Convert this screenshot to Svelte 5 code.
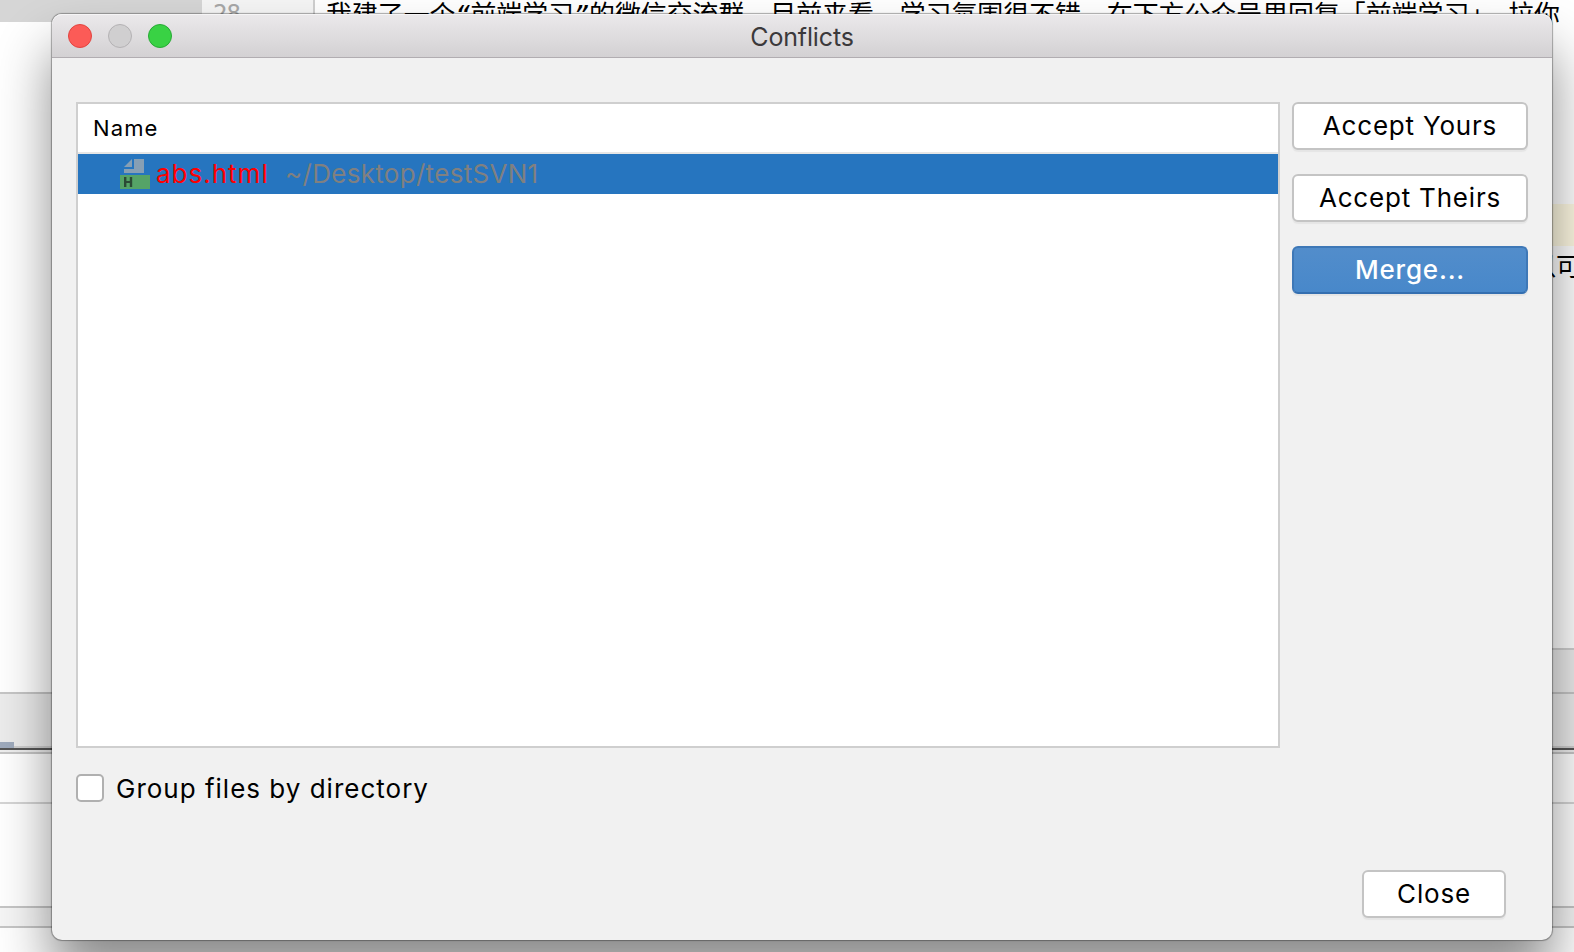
<script>
  const files = [{ name: 'abs.html', path: '~/Desktop/testSVN1' }];
  let grouped = $state(false);
</script>

<div class="screen">
  <div class="editor">
    <div class="side"></div>
    <div class="gutter">28</div>
    <div class="code">
      <div class="line">我建了一个<span class="quote">“</span>前端学习<span class="quote">”</span>的微信交流群，目前来看，学习氛围很不错，在下方公众号里回复「前端学习」，拉你</div>
      <div class="current"></div>
      <div class="line second">以可</div>
    </div>
  </div>
  <div class="status"><span></span></div>
  <div class="toolbar"><i></i></div>
  <div class="heading"></div>
  <div class="panel"></div>
  <div class="row"></div>
  <div class="foot"></div>

  <div class="dialog">
    <header>
      <div class="lights"><b class="red"></b><b class="gray"></b><b class="green"></b></div>
      <h1>Conflicts</h1>
    </header>
    <main>
      <section class="list">
        <div class="head">Name</div>
        {#each files as file}
          <div class="file">
            <svg width="30" height="30" viewBox="0 0 30 30">
              <path d="M4 8 12 0v8zM14 0h10v14H4v-4h10z" fill="#879fb4" />
              <path d="M0 16h30v14H0z" fill="#55a367" />
              <path d="M4 18h2.4v4h3.4v-4h2.4v10H9.800v-4H6.400v4H4z" fill="#2b4a35" />
            </svg>
            <span class="name">{file.name}</span>
            <span class="path">{file.path}</span>
          </div>
        {/each}
      </section>
      <aside>
        <button class="yours">Accept Yours</button>
        <button class="theirs">Accept Theirs</button>
        <button class="primary">Merge...</button>
      </aside>
    </main>
    <label><input type="checkbox" bind:checked={grouped} /><span>Group files by directory</span></label>
    <footer><button class="close">Close</button></footer>
  </div>
</div>

<style>
  :global(body) { margin: 0; }
  * { box-sizing: border-box; }
  .screen { position: relative; width: 1574px; height: 952px; overflow: hidden; background: #fff; display: flex; flex-direction: column; font-family: Inter, 'Noto Sans CJK SC', sans-serif; }
  .editor { height: 648px; display: flex; }
  .side { width: 202px; height: 22px; background: #d6d6d6; }
  .gutter { width: 113px; height: 40px; border-right: 2px solid #cfcfcf; background: #f5f5f5; padding-left: 11px; font: 24px/28px 'DejaVu Sans Mono', monospace; letter-spacing: -1px; color: #a8a8a8; }
  .code { flex: 1; overflow: hidden; color: #000; }
  .line { font: 25.9px/38px 'Noto Sans CJK SC', sans-serif; white-space: nowrap; padding-left: 11px; margin-top: -6px; height: 38px; }
  .quote { display: inline-block; width: 15px; font: italic 25px/30px 'DejaVu Sans Mono', monospace; }
  .current { height: 42px; margin-top: 172px; background: #fffae3; }
  .second { text-align: right; margin-top: 0; margin-right: -8px; }
  .status { height: 46px; background: #fff; border-bottom: 2px solid #c6c6c6; display: flex; justify-content: flex-end; }
  .status span { width: 100px; height: 44px; background: #ececec; border-top: 2px solid #cfcfcf; }
  .toolbar { height: 56px; background: #ececec; border-bottom: 2px solid #555; display: flex; align-items: flex-end; box-shadow: inset 0 -2px #cfcfcf; }
  .toolbar i { width: 14px; height: 6px; background: #9fabbd; }
  .heading { height: 54px; border-bottom: 2px solid #d5d5d5; background: linear-gradient(#eee 2px, #c6c6c6 2px 4px, #fff 4px); }
  .panel { height: 104px; border-bottom: 2px solid #c6c6c6; }
  .row { height: 20px; border-bottom: 2px solid #c6c6c6; background: #f6f6f6; }
  .foot { flex: 1; background: #fff; }

  .dialog { position: absolute; left: 52px; top: 14px; width: 1500px; height: 926px; background: #f1f1f1; border-radius: 10px; box-shadow: 0 0 1px 1px rgba(0, 0, 0, .32), 0 36px 54px rgba(0, 0, 0, .46); display: flex; flex-direction: column; color: #000; }
  header { height: 44px; flex: none; border-radius: 10px 10px 0 0; background: linear-gradient(#ebe9eb, #d3d1d3); border-bottom: 1px solid #b1adb1; box-shadow: inset 0 1px #f6f5f6; display: grid; grid-template-columns: 120px 1fr 120px; align-items: center; }
  .lights { display: flex; gap: 16px; padding-left: 16px; }
  .lights b { width: 24px; height: 24px; border-radius: 50%; flex: none; }
  .red { background: #fc5b57; border: 1px solid #e2443f; }
  .gray { background: #d0cfd0; border: 1px solid #b4b2b4; }
  .green { background: #39d244; border: 1px solid #27aa35; }
  h1 { margin: 2px 0 0; text-align: center; font-size: 25px; line-height: 30px; font-weight: 400; color: #3b393b; letter-spacing: -.15px; }
  main { display: flex; gap: 12px; padding: 44px 24px 0; }
  .list { width: 1204px; height: 646px; border: 2px solid #cfcfcf; background: #fff; }
  .head { height: 50px; border-bottom: 2px solid #e6e6e6; padding: 0 0 0 15px; font-size: 22px; line-height: 49px; letter-spacing: 1.1px; }
  .file { height: 40px; background: #2675bf; display: flex; align-items: center; padding-left: 42px; font-size: 26px; line-height: 40px; white-space: pre; }
  .file svg { margin-top: -1px; }
  .name { color: #f00; margin-left: 6px; width: 129px; letter-spacing: 1px; }
  .path { color: #808080; letter-spacing: .3px; }
  aside { display: flex; flex-direction: column; gap: 24px; }
  button { width: 236px; height: 48px; padding: 0; border: 2px solid #c4c4c4; border-radius: 6px; background: #fff; box-shadow: 0 2px 1px #e5e5e5; font: 26px/40px Inter, sans-serif; letter-spacing: .8px; color: #000; white-space: nowrap; }
  .primary { background: linear-gradient(#528dcb, #4888ca); border-color: #3e78b7; border-bottom-color: #346fb0; color: #fff; font-weight: 500; }
  label { display: flex; align-items: center; gap: 12px; height: 28px; margin: 26px 0 0 24px; font-size: 26px; letter-spacing: 1px; }
  input { appearance: none; width: 28px; height: 28px; margin: 0; border: 2px solid #b0b0b0; border-radius: 5px; background: #fff; }
  footer { margin-top: 68px; padding-right: 46px; display: flex; justify-content: flex-end; }
  .close { width: 144px; }
</style>
